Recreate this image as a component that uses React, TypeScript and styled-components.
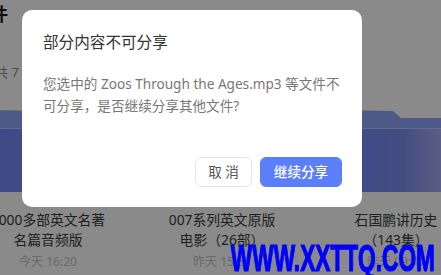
import styled, { createGlobalStyle } from "styled-components";

const GlobalStyle = createGlobalStyle`
  html, body {
    margin: 0;
    padding: 0;
    width: 441px;
    height: 275px;
    overflow: hidden;
    background: #ffffff;
    font-family: "Noto Sans", "Noto Sans CJK SC", sans-serif;
  }
`;

type FolderItem = {
  name: string[];
  time: string;
};

const folders: FolderItem[] = [
  { name: ["1000多部英文名著", "名篇音频版"], time: "今天 16:20" },
  { name: ["007系列英文原版", "电影（26部）"], time: "昨天 15:52" },
  { name: ["石国鹏讲历史", "（143集）"], time: "昨天 09:41" },
];

const Page = styled.div`
  width: 560px;
  margin-left: -39px;
  display: flex;
  flex-direction: column;
`;

const PageTitle = styled.div`
  margin: 1px 0 0 11px;
  font-size: 18px;
  line-height: 26px;
  font-weight: 700;
  color: #1c1c1c;
`;

const Count = styled.div`
  margin: 35px 0 0 34px;
  font-size: 13px;
  line-height: 20px;
  color: #8a8a8a;
`;

const Grid = styled.div`
  margin-top: 28px;
  display: grid;
  grid-template-columns: repeat(3, 174px);
`;

const Cell = styled.div`
  display: flex;
  flex-direction: column;
  align-items: center;
`;

const FolderName = styled.div`
  margin-top: 18px;
  width: 160px;
  text-align: center;
  font-size: 13.8px;
  line-height: 20px;
  color: #3a3a3a;
  white-space: nowrap;
`;

const FolderTime = styled.div`
  margin-top: 3px;
  font-size: 12px;
  line-height: 18px;
  color: #c4c4c4;
`;

const Mask = styled.div`
  position: fixed;
  inset: 0;
  background: rgba(0, 0, 0, 0.46);
  padding: 10px 0 0 22px;
  box-sizing: border-box;
`;

const Dialog = styled.div`
  width: 340px;
  box-sizing: border-box;
  background: #ffffff;
  border-radius: 10px;
  padding: 21px 20px 20px 21px;
  display: flex;
  flex-direction: column;
`;

const DialogTitle = styled.div`
  font-size: 15.6px;
  line-height: 22px;
  color: #333333;
`;

const DialogBody = styled.div`
  margin-top: 20px;
  font-size: 13.6px;
  line-height: 22px;
  color: #777777;
`;

const Actions = styled.div`
  margin-top: 40px;
  display: flex;
  justify-content: flex-end;
  gap: 8px;
`;

const Button = styled.button<{ $primary?: boolean }>`
  height: 30px;
  padding: 0;
  width: ${({ $primary }) => ($primary ? "82px" : "57px")};
  border-radius: 6px;
  border: 1px solid ${({ $primary }) => ($primary ? "#5b7ffa" : "#e6e6e6")};
  background: ${({ $primary }) => ($primary ? "#5b7ffa" : "#ffffff")};
  color: ${({ $primary }) => ($primary ? "#ffffff" : "#555555")};
  font-family: inherit;
  font-size: 13.6px;
  line-height: 28px;
  font-weight: ${({ $primary }) => ($primary ? 500 : 400)};
  cursor: pointer;
`;

const Watermark = styled.div`
  position: fixed;
  right: 6px;
  bottom: -4px;
  font-family: "Liberation Sans", Arial, sans-serif;
  font-weight: 700;
  font-size: 36px;
  line-height: 40px;
  color: #0000ff;
  transform: scaleX(0.63);
  transform-origin: right bottom;
  white-space: nowrap;
  -webkit-text-stroke: 1.2px #0000ff;
`;

function FolderIcon({ id }: { id: number }) {
  return (
    <svg width="150" height="82" viewBox="0 0 150 82">
      <defs>
        <linearGradient id={`front${id}`} x1="0" y1="0" x2="1" y2="0">
          <stop offset="0" stopColor="#6f88ff" />
          <stop offset="0.55" stopColor="#7f8df0" />
          <stop offset="1" stopColor="#c8c6f8" />
        </linearGradient>
      </defs>
      <path d="M0 4 Q0 0 4 0 L72 1 L80 8 L146 8 Q150 8 150 12 L150 24 L0 24 Z" fill="#8ea4f8" />
      <rect x="0" y="18" width="150" height="64" rx="3" fill={`url(#front${id})`} />
      <rect x="0" y="18" width="150" height="1" fill="#b9c6ff" />
    </svg>
  );
}

export default function App() {
  return (
    <>
      <GlobalStyle />
      <Page>
        <PageTitle>文件</PageTitle>
        <Count>共 7 个文件</Count>
        <Grid>
          {folders.map((f, i) => (
            <Cell key={i}>
              <FolderIcon id={i} />
              <FolderName>
                {f.name[0]}
                <br />
                {f.name[1]}
              </FolderName>
              <FolderTime>{f.time}</FolderTime>
            </Cell>
          ))}
        </Grid>
      </Page>
      <Mask>
        <Dialog>
          <DialogTitle>部分内容不可分享</DialogTitle>
          <DialogBody>
            您选中的 Zoos Through the Ages.mp3 等文件不
            <br />
            可分享，是否继续分享其他文件?
          </DialogBody>
          <Actions>
            <Button>取 消</Button>
            <Button $primary>继续分享</Button>
          </Actions>
        </Dialog>
      </Mask>
      <Watermark>WWW.XXTTQ.COM</Watermark>
    </>
  );
}
